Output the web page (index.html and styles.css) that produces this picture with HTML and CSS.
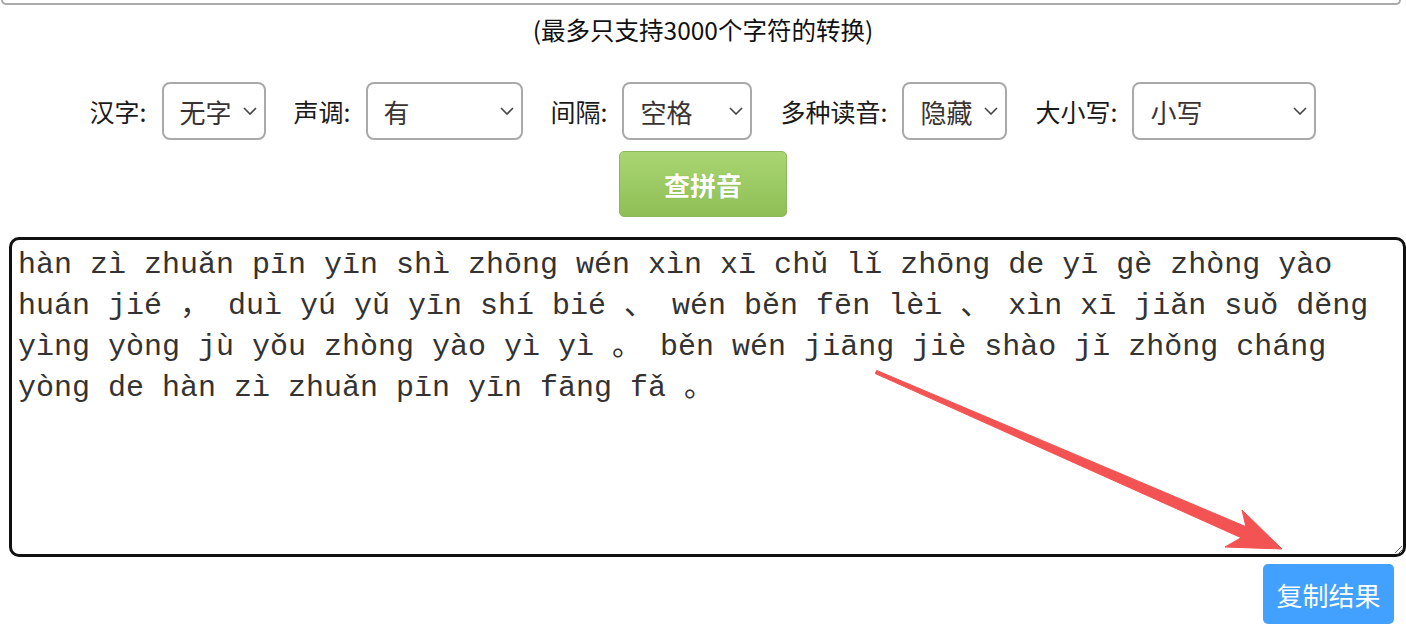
FILE: index.html
```html
<!DOCTYPE html>
<html lang="zh-CN">
<head>
<meta charset="utf-8">
<title>汉字转拼音</title>
<link rel="stylesheet" href="styles.css">
</head>
<body>
<div class="page">
  <div class="prev-box"></div>
  <p class="note">(最多只支持3000个字符的转换)</p>

  <div class="options">
    <div class="opt">
      <label class="opt-label">汉字:</label>
      <div class="sel sel-w1">
        <select><option>无字</option></select>
        <svg class="chev" viewBox="0 0 14 8"><path d="M1 1l6 6 6-6"/></svg>
      </div>
    </div>
    <div class="opt">
      <label class="opt-label">声调:</label>
      <div class="sel sel-w2">
        <select><option>有</option></select>
        <svg class="chev" viewBox="0 0 14 8"><path d="M1 1l6 6 6-6"/></svg>
      </div>
    </div>
    <div class="opt">
      <label class="opt-label">间隔:</label>
      <div class="sel sel-w3">
        <select><option>空格</option></select>
        <svg class="chev" viewBox="0 0 14 8"><path d="M1 1l6 6 6-6"/></svg>
      </div>
    </div>
    <div class="opt">
      <label class="opt-label">多种读音:</label>
      <div class="sel sel-w4">
        <select><option>隐藏</option></select>
        <svg class="chev" viewBox="0 0 14 8"><path d="M1 1l6 6 6-6"/></svg>
      </div>
    </div>
    <div class="opt">
      <label class="opt-label">大小写:</label>
      <div class="sel sel-w5">
        <select><option>小写</option></select>
        <svg class="chev" viewBox="0 0 14 8"><path d="M1 1l6 6 6-6"/></svg>
      </div>
    </div>
  </div>

  <div class="action">
    <button class="btn-go">查拼音</button>
  </div>

  <textarea class="result" spellcheck="false">hàn zì zhuǎn pīn yīn shì zhōng wén xìn xī chǔ lǐ zhōng de yī gè zhòng yào huán jié ， duì yú yǔ yīn shí bié 、 wén běn fēn lèi 、 xìn xī jiǎn suǒ děng yìng yòng jù yǒu zhòng yào yì yì 。 běn wén jiāng jiè shào jǐ zhǒng cháng yòng de hàn zì zhuǎn pīn yīn fāng fǎ 。</textarea>

  <div class="copy-row">
    <button class="btn-copy">复制结果</button>
  </div>

  <svg class="arrow" viewBox="0 0 1406 642" width="1406" height="642">
    <polygon points="876.6,370.4 1245.9,526.7 1242,510 1282,549 1225,547 1241.1,537.7 875.4,373.6" fill="#f45353" stroke="#f45353" stroke-width="1" stroke-linejoin="round"/>
  </svg>
</div>
</body>
</html>
```

FILE: styles.css
```css
html, body {
  margin: 0;
  padding: 0;
  background: #fff;
  overflow: hidden;
}

body {
  font-family: "Noto Sans CJK SC", "Noto Sans", sans-serif;
  color: #222;
}

.page {
  position: relative;
  width: 1406px;
  height: 642px;
}

.prev-box {
  height: 3px;
  margin: 0 5px 0 1px;
  border: 2px solid #a9a9a9;
  border-top: 0;
  border-radius: 0 0 10px 10px;
}

.note {
  margin: 12px 0 0;
  text-align: center;
  font-size: 24.5px;
  line-height: 26px;
  color: #111;
}

.options {
  display: flex;
  justify-content: center;
  align-items: center;
  gap: 28px;
  margin-top: 39px;
}

.opt {
  display: flex;
  align-items: center;
}

.opt-label {
  font-size: 25px;
  line-height: 30px;
  color: #1a1a1a;
  margin-right: 15px;
}

.sel {
  position: relative;
  height: 58px;
}

.sel select {
  appearance: none;
  -webkit-appearance: none;
  box-sizing: border-box;
  width: 100%;
  height: 58px;
  margin: 0;
  padding: 0 0 0 16px;
  border: 2px solid #a9a9a9;
  border-radius: 8px;
  background: #fff;
  font-family: "Noto Sans CJK SC", sans-serif;
  font-size: 26px;
  color: #3a3333;
  outline: none;
}

.sel-w1 { width: 104px; }
.sel-w2 { width: 157px; }
.sel-w3 { width: 130px; }
.sel-w4 { width: 105px; }
.sel-w5 { width: 184px; }

.chev {
  position: absolute;
  right: 9px;
  top: 25px;
  width: 14px;
  height: 8px;
  fill: none;
  stroke: #444;
  stroke-width: 1.6;
  pointer-events: none;
}

.action {
  display: flex;
  justify-content: center;
  margin-top: 11px;
}

.btn-go {
  width: 168px;
  height: 66px;
  border: 1px solid #8bb957;
  border-radius: 5px;
  background: linear-gradient(#a9d672, #8fbe56);
  color: #fff;
  font-family: "Noto Sans CJK SC", sans-serif;
  font-size: 26px;
  font-weight: 700;
  text-shadow: 0 0 1px rgba(80, 120, 30, 0.3);
  cursor: pointer;
}

.result {
  display: block;
  box-sizing: border-box;
  width: 1397px;
  height: 320px;
  margin: 20px 0 0 9px;
  padding: 5px 6px;
  border: 3px solid #111;
  border-radius: 10px;
  font-family: "Liberation Mono", "Noto Sans CJK SC", monospace;
  font-size: 30px;
  line-height: 41px;
  color: #333;
  background: #fff;
  outline: none;
  overflow: hidden;
}

.copy-row {
  display: flex;
  justify-content: flex-end;
  margin-top: 7px;
  padding-right: 12px;
}

.btn-copy {
  width: 131px;
  height: 60px;
  border: 0;
  border-radius: 5px;
  background: #42a0ff;
  color: #fff;
  font-family: "Noto Sans CJK SC", sans-serif;
  font-size: 26px;
  padding: 0;
  cursor: pointer;
}

.arrow {
  position: absolute;
  left: 0;
  top: 0;
  pointer-events: none;
}
```
